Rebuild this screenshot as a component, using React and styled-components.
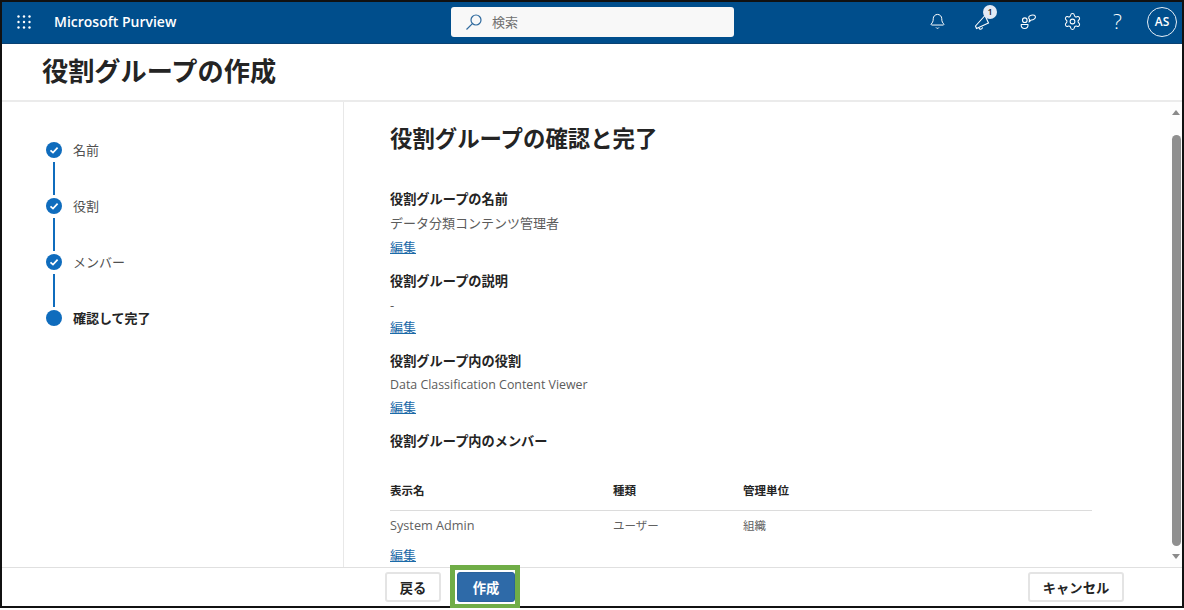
import styled, { createGlobalStyle } from "styled-components";
import { Bell, Settings } from "lucide-react";

const GlobalStyle = createGlobalStyle`
  html, body {
    margin: 0;
    background: #fff;
  }
  * { box-sizing: border-box; }
`;

const fontStack = `"Open Sans", "Noto Sans CJK JP", sans-serif`;

// Frame
const Shell = styled.div`
  width: 1184px;
  height: 608px;
  border: 2px solid #111;
  display: flex;
  flex-direction: column;
  font-family: ${fontStack};
  font-size: 13px;
  color: #242424;
  background: #fff;
`;

// Top bar
const TopBar = styled.header`
  height: 42px;
  flex: none;
  padding-bottom: 2px;
  background: #004e8c;
  border-bottom: 1px solid #0a4273;
  display: flex;
  align-items: center;
  color: #fff;
`;

const Waffle = styled.svg`
  width: 14px;
  height: 14px;
  margin-left: 15px;
  flex: none;
`;

const Brand = styled.span`
  width: 397px;
  margin-left: 23px;
  font-size: 14px;
  font-weight: 600;
  flex: none;
`;

const SearchBox = styled.div`
  width: 283px;
  height: 30px;
  background: #f8f8f8;
  border-radius: 3px;
  display: flex;
  align-items: center;
  gap: 9px;
  padding-left: 14px;
  color: #707070;
  font-size: 13px;
  flex: none;
`;

const IconRow = styled.div`
  margin-left: auto;
  display: flex;
  align-items: center;
  padding-right: 5px;
`;

const IconCell = styled.div`
  position: relative;
  width: 45px;
  height: 32px;
  display: flex;
  align-items: center;
  justify-content: center;
`;

const Badge = styled.span`
  position: absolute;
  top: -1px;
  left: 23px;
  width: 14px;
  height: 14px;
  border-radius: 50%;
  background: #e3eaf5;
  color: #1b1b1b;
  font-size: 9px;
  font-weight: 600;
  display: flex;
  align-items: center;
  justify-content: center;
`;

const HelpMark = styled.span`
  font-family: "Open Sans", sans-serif;
  font-size: 21px;
  font-weight: 300;
  line-height: 1;
`;

const Avatar = styled.div`
  width: 30px;
  height: 30px;
  margin-left: 7px;
  border: 1px solid #e6eef6;
  border-radius: 50%;
  display: flex;
  align-items: center;
  justify-content: center;
  font-size: 12px;
  font-weight: 600;
`;

// Page title
const TitleBar = styled.div`
  height: 58px;
  flex: none;
  padding: 0 0 2px 40px;
  display: flex;
  align-items: center;
  border-bottom: 2px solid #ebebeb;
`;

const PageTitle = styled.h1`
  margin: 0;
  font-size: 26.2px;
  line-height: 36px;
  font-weight: 700;
  color: #242424;
`;

// Wizard body
const Body = styled.div`
  flex: 1;
  min-height: 0;
  display: flex;
`;

const Sidebar = styled.nav`
  width: 342px;
  flex: none;
  padding: 40px 0 0 44px;
  border-right: 1px solid #e8e8e8;
`;

const StepRow = styled.div`
  display: flex;
  align-items: center;
  gap: 11px;
  height: 16px;
  line-height: 14px;
  font-weight: ${(p) => (p.$current ? 700 : 400)};
  color: ${(p) => (p.$current ? "#242424" : "#505050")};
`;

const Dot = styled.span`
  width: 16px;
  height: 16px;
  border-radius: 50%;
  background: #0f6cbd;
  display: flex;
  align-items: center;
  justify-content: center;
  flex: none;
`;

const Connector = styled.div`
  width: 2px;
  height: 33px;
  margin: 4px 0 3px 7px;
  background: #0f6cbd;
`;

const Main = styled.main`
  flex: 1;
  min-width: 0;
  padding: 20px 0 0 46px;
`;

const Heading = styled.h2`
  margin: 0 0 31px;
  font-size: 22.4px;
  line-height: 34px;
  font-weight: 600;
  color: #242424;
`;

const Section = styled.section`
  margin-bottom: ${(p) => (p.$wide ? 10 : 12)}px;
`;

const Label = styled.div`
  font-size: 13.2px;
  line-height: 24px;
  font-weight: 700;
  color: #242424;
`;

const Value = styled.div`
  font-size: ${(p) => (p.$latin ? 12.4 : 13)}px;
  line-height: 24px;
  color: #5c5c5c;
`;

const EditLink = styled.a`
  display: block;
  width: max-content;
  line-height: ${(p) => (p.$tall ? 24 : 20)}px;
  color: #1b6aa8;
  text-decoration: underline;
`;

const MemberTable = styled.div`
  width: 702px;
  margin-top: 17px;
`;

const TableRow = styled.div`
  display: grid;
  grid-template-columns: 223px 130px 1fr;
  align-items: center;
  height: ${(p) => (p.$head ? 41 : 27)}px;
  font-size: 11.5px;
  font-weight: ${(p) => (p.$head ? 700 : 400)};
  color: ${(p) => (p.$head ? "#242424" : "#616161")};
  border-bottom: ${(p) => (p.$head ? "1px solid #dcdcdc" : "none")};
`;

const MemberName = styled.span`
  font-size: 12.7px;
`;

const RowLink = styled.div`
  margin-top: 5px;
`;

// Scrollbar
const ScrollBar = styled.div`
  width: 12px;
  flex: none;
  padding-top: 8px;
  display: flex;
  flex-direction: column;
  align-items: center;
  background: #fdfdfd;
`;

const Arrow = styled.span`
  width: 0;
  height: 0;
  border-left: 4px solid transparent;
  border-right: 4px solid transparent;
  border-${(p) => (p.$down ? "top" : "bottom")}: 5px solid #8a8a8a;
`;

const Thumb = styled.div`
  width: 9px;
  height: 411px;
  margin: 20px 0 8px;
  border-radius: 5px;
  background: #8f8f8f;
`;

// Footer
const Footer = styled.footer`
  height: 39px;
  flex: none;
  border-top: 1px solid #e0e0e0;
  padding: 4px 58px 0 383px;
  display: flex;
  align-items: flex-start;
  gap: 16px;
`;

const Button = styled.button`
  position: relative;
  height: 30px;
  width: ${(p) => p.$width}px;
  padding: 0;
  border: ${(p) => (p.$primary ? "1px solid #2a629c" : "2px solid #e4e4e4")};
  border-radius: 3px;
  background: ${(p) => (p.$primary ? "#2e6aa8" : "#fff")};
  color: ${(p) => (p.$primary ? "#fff" : "#242424")};
  font-family: ${fontStack};
  font-size: 13.3px;
  font-weight: 700;
  margin-left: ${(p) => (p.$push ? "auto" : "0")};
`;

// Green annotation drawn around the primary button in the screenshot
const Highlight = styled.span`
  position: absolute;
  inset: -8px -6px -8px -8px;
  border: 5px solid #70ad47;
  pointer-events: none;
`;

const CheckMark = () => (
  <svg width="10" height="10" viewBox="0 0 10 10" fill="none">
    <path d="M1.5 5.3 4 7.6 8.6 2.6" stroke="#fff" strokeWidth="1.7" />
  </svg>
);

const SearchIcon = () => (
  <svg width="18" height="18" viewBox="0 0 18 18" fill="none" stroke="#2f6a9e" strokeWidth="1.2">
    <circle cx="11" cy="7" r="5" />
    <path d="M7.4 10.6 1.5 16.5" />
  </svg>
);

const Megaphone = () => (
  <svg width="20" height="20" viewBox="0 0 20 20" fill="none" stroke="#fff" strokeWidth="1.1">
    <path d="M12 3.5 2.5 14l1 2.5L15.5 11z" />
    <path d="M6 16c.5 1.6 3 1.8 3.6-.6" />
  </svg>
);

const Community = () => (
  <svg width="18" height="18" viewBox="0 0 18 18" fill="none" stroke="#fff" strokeWidth="1.1">
    <circle cx="5.8" cy="7.2" r="2.3" />
    <path d="M2.3 11.5h6.6c.6 2.3-1 4-3.3 4s-3.9-1.7-3.3-4z" />
    <path d="M10 3.5c.6-1.2 3.6-1.9 5.3-1.2 1.6.7 1.4 2.6.1 3.6-1.2.9-2.4 1.2-3.3 1.1L10.3 8.6l.2-2.2C9.6 5.6 9.6 4.300 10 3.500z" />
  </svg>
);

const waffleDots = [1.5, 7, 12.5].flatMap((y) => [1.5, 7, 12.5].map((x) => [x, y]));

export default function App() {
  return (
    <>
      <GlobalStyle />
      <Shell>
        <TopBar>
          <Waffle viewBox="0 0 14 14">
            {waffleDots.map(([x, y]) => (
              <circle key={`${x}-${y}`} cx={x} cy={y} r="1.2" fill="#fff" />
            ))}
          </Waffle>
          <Brand>Microsoft Purview</Brand>
          <SearchBox>
            <SearchIcon />
            検索
          </SearchBox>
          <IconRow>
            <IconCell>
              <Bell size={17} strokeWidth={1.4} />
            </IconCell>
            <IconCell>
              <Megaphone />
              <Badge>1</Badge>
            </IconCell>
            <IconCell>
              <Community />
            </IconCell>
            <IconCell>
              <Settings size={19} strokeWidth={1.3} />
            </IconCell>
            <IconCell>
              <HelpMark>?</HelpMark>
            </IconCell>
            <Avatar>AS</Avatar>
          </IconRow>
        </TopBar>

        <TitleBar>
          <PageTitle>役割グループの作成</PageTitle>
        </TitleBar>

        <Body>
          <Sidebar>
            <StepRow>
              <Dot><CheckMark /></Dot>名前
            </StepRow>
            <Connector />
            <StepRow>
              <Dot><CheckMark /></Dot>役割
            </StepRow>
            <Connector />
            <StepRow>
              <Dot><CheckMark /></Dot>メンバー
            </StepRow>
            <Connector />
            <StepRow $current>
              <Dot />確認して完了
            </StepRow>
          </Sidebar>

          <Main>
            <Heading>役割グループの確認と完了</Heading>
            <Section $wide>
              <Label>役割グループの名前</Label>
              <Value>データ分類コンテンツ管理者</Value>
              <EditLink $tall href="#">編集</EditLink>
            </Section>
            <Section>
              <Label>役割グループの説明</Label>
              <Value>-</Value>
              <EditLink href="#">編集</EditLink>
            </Section>
            <Section>
              <Label>役割グループ内の役割</Label>
              <Value $latin>Data Classification Content Viewer</Value>
              <EditLink href="#">編集</EditLink>
            </Section>
            <Label>役割グループ内のメンバー</Label>
            <MemberTable>
              <TableRow $head>
                <span>表示名</span>
                <span>種類</span>
                <span>管理単位</span>
              </TableRow>
              <TableRow>
                <MemberName>System Admin</MemberName>
                <span>ユーザー</span>
                <span>組織</span>
              </TableRow>
            </MemberTable>
            <RowLink>
              <EditLink $tall href="#">編集</EditLink>
            </RowLink>
          </Main>

          <ScrollBar>
            <Arrow />
            <Thumb />
            <Arrow $down />
          </ScrollBar>
        </Body>

        <Footer>
          <Button $width={56}>戻る</Button>
          <Button $primary $width={58}>
            作成
            <Highlight />
          </Button>
          <Button $push $width={96}>キャンセル</Button>
        </Footer>
      </Shell>
    </>
  );
}
